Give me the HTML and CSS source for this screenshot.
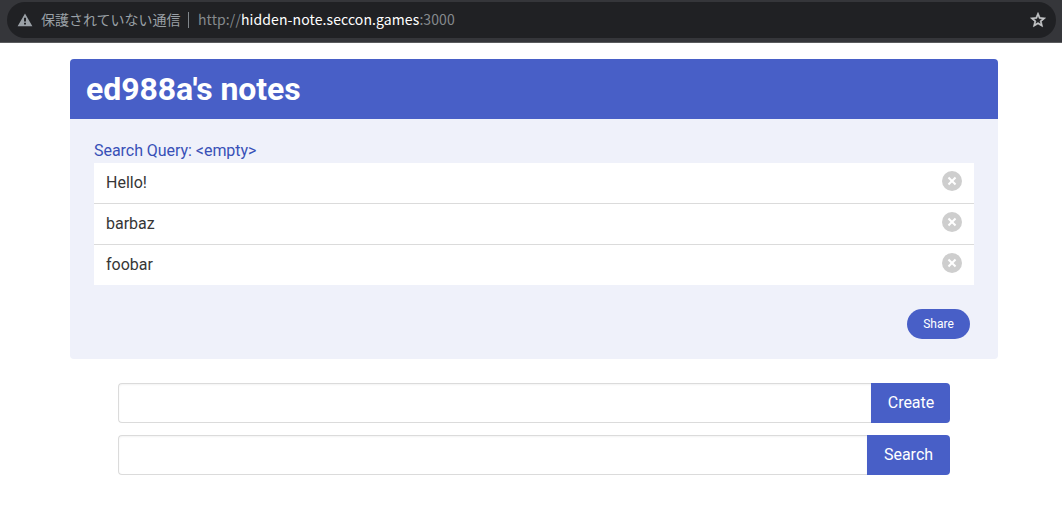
FILE: index.html
```html
<!DOCTYPE html>
<html lang="ja">
<head>
<meta charset="utf-8">
<title>Notes</title>
<link rel="stylesheet" href="styles.css">
</head>
<body>
<header class="toolbar">
  <div class="address-bar">
    <svg class="warning" viewBox="0 0 16 14"><path fill="#9aa0a6" fill-rule="evenodd" d="M8 .4 15.4 13.2H.6ZM7 4.8v3.7h2V4.8ZM7 9.8v1.8h2V9.8Z"/></svg>
    <span class="security">保護されていない通信</span>
    <span class="divider"></span>
    <span class="url">http://<span class="host">hidden-note.seccon.games</span>:3000</span>
    <svg class="star" viewBox="0 0 24 24"><path fill="#c6c8ca" stroke="#c6c8ca" stroke-width=".8" d="M22 9.24l-7.19-.62L12 2 9.19 8.63 2 9.24l5.46 4.73L5.82 21 12 17.27 18.18 21l-1.63-7.03L22 9.24zM12 15.4l-3.76 2.27 1-4.28-3.32-2.88 4.38-.38L12 6.1l1.71 4.04 4.38.38-3.32 2.88 1 4.28L12 15.4z"/></svg>
  </div>
</header>
<main class="container">
  <article class="message">
    <div class="message-header"><h1 class="title">ed988a's notes</h1></div>
    <div class="message-body">
      <p class="query">Search Query: &lt;empty&gt;</p>
      <ul class="notes">
        <li class="note"><span>Hello!</span><button class="delete" aria-label="delete"></button></li>
        <li class="note"><span>barbaz</span><button class="delete" aria-label="delete"></button></li>
        <li class="note"><span>foobar</span><button class="delete" aria-label="delete"></button></li>
      </ul>
      <div class="actions"><button class="share">Share</button></div>
    </div>
  </article>
  <div class="forms">
    <form class="field"><input class="input" type="text"><button class="button create" type="button">Create</button></form>
    <form class="field"><input class="input" type="text"><button class="button search" type="button">Search</button></form>
  </div>
</main>
</body>
</html>
```
FILE: styles.css
```css
* { box-sizing: border-box; margin: 0; padding: 0; }
body {
  background: #fff;
  color: #363636;
  font: 16px/24px Roboto, "Liberation Sans", sans-serif;
}
button { border: 0; font-family: inherit; color: #fff; background: #485fc7; }
.toolbar {
  height: 43px;
  padding: 2px 6px 4px 7px;
  background: #35363a;
  border-bottom: 1px solid #5a5b5e;
}
.address-bar {
  display: flex;
  align-items: center;
  height: 36px;
  padding: 0 9px 0 10px;
  border-radius: 18px;
  background: #202124;
  color: #9aa0a6;
  font: 14px/20px "Noto Sans CJK JP", sans-serif;
  white-space: nowrap;
}
.warning { width: 16px; height: 14px; margin-right: 8px; }
.security { width: 140px; padding-bottom: 2px; }
.divider { width: 1px; height: 16px; margin: 0 9px 0 7px; background: #80868b; }
.url { padding-bottom: 2px; color: #85898d; letter-spacing: .1px; }
.host { color: #fff; }
.star { width: 18px; height: 18px; margin-left: auto; }
.container { width: 928px; margin: 16px 0 0 70px; }
.message { border-radius: 4px; background: #eff1fa; }
.message-header {
  height: 60px;
  padding: 12px 16px;
  border-radius: 4px 4px 0 0;
  background: #485fc7;
}
.title { color: #fff; font-size: 32px; line-height: 36px; font-weight: 700; letter-spacing: -.08px; }
.message-body { padding: 20px 24px; }
.query { color: #3850b7; letter-spacing: -.04px; }
.notes { list-style: none; background: #fff; }
.note {
  display: flex;
  justify-content: space-between;
  padding: 8px 12px;
}
.note + .note { border-top: 1px solid #dbdbdb; }
.delete {
  display: grid;
  place-items: center;
  width: 20px;
  height: 20px;
  border-radius: 50%;
  background: #cecece;
  transform: rotate(45deg);
}
.delete::before, .delete::after { content: ""; grid-area: 1 / 1; background: #fff; }
.delete::before { width: 10px; height: 2px; }
.delete::after { width: 2px; height: 10px; }
.actions { display: flex; justify-content: flex-end; padding: 24px 4px 0 0; }
.share { width: 63px; height: 30px; border-radius: 15px; font-size: 12px; line-height: 18px; }
.forms { display: grid; gap: 12px; margin: 24px 48px 0; }
.field { display: flex; height: 40px; }
.input {
  flex: 1;
  min-width: 0;
  border: 1px solid #dbdbdb;
  border-right: 0;
  border-radius: 4px 0 0 4px;
  box-shadow: inset 0 1px 2px rgba(10, 10, 10, .05);
}
.button { border-radius: 0 4px 4px 0; font-size: 16px; line-height: 24px; }
.create { width: 79px; padding-left: 1px; letter-spacing: -.05px; }
.search { width: 83px; }
```
